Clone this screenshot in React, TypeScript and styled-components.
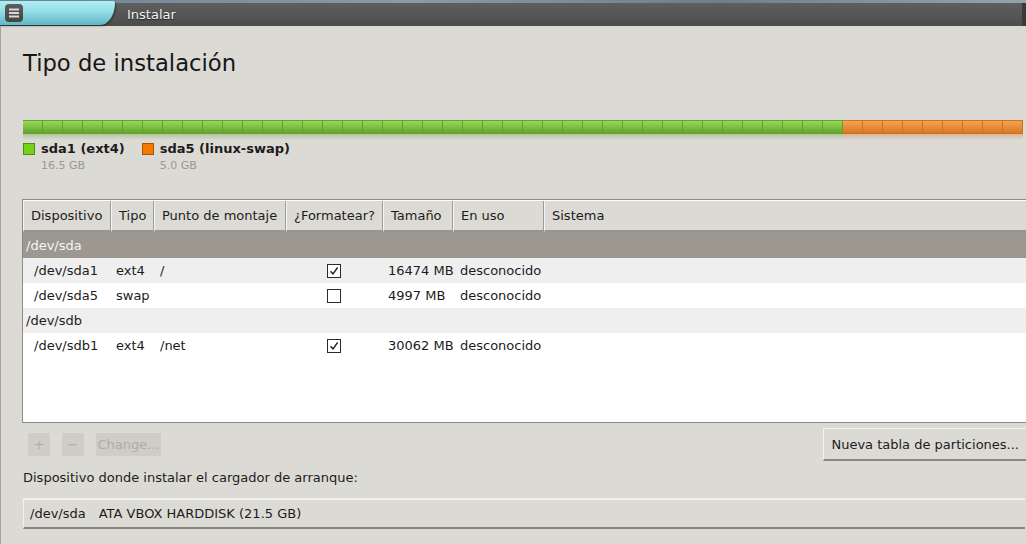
import React from 'react';
import styled, { createGlobalStyle } from 'styled-components';

const GlobalStyle = createGlobalStyle`
  html, body {
    margin: 0;
    padding: 0;
    background: #dcdad5;
  }
  body {
    width: 1026px;
    height: 544px;
    overflow: hidden;
    font-family: 'DejaVu Sans', 'Liberation Sans', sans-serif;
    font-size: 13px;
    color: #1c1c1c;
  }
`;

const Screen = styled.div`
  width: 1026px;
  height: 544px;
  display: flex;
  flex-direction: column;
  overflow: hidden;
`;

const DesktopStrip = styled.div`
  height: 3px;
  background: linear-gradient(90deg, #6f8393 0%, #8a9aa6 40%, #6c7f8e 70%, #97a3ab 100%);
  flex-shrink: 0;
`;

const TitleBar = styled.div`
  height: 23px;
  display: flex;
  align-items: center;
  background: linear-gradient(180deg, #5f5f5f 0%, #4c4c4c 100%);
  border-right: 4px solid #3a3a3a;
  flex-shrink: 0;
`;

const MenuTab = styled.div`
  width: 115px;
  height: 24px;
  margin-top: -2px;
  align-self: flex-start;
  background: linear-gradient(180deg, #aef0f4 0%, #93dde6 45%, #5fb7c6 100%);
  border-bottom-right-radius: 16px 24px;
  border-top-right-radius: 2px;
  box-shadow: 1px 1px 2px rgba(0, 0, 0, 0.45);
  display: flex;
  align-items: center;
  padding-left: 5px;
  box-sizing: border-box;
`;

const MenuButton = styled.div`
  width: 18px;
  height: 18px;
  border-radius: 4px;
  background: linear-gradient(180deg, #5c5c5c, #454545);
  display: flex;
  align-items: center;
  justify-content: center;
`;

const WindowTitle = styled.span`
  margin-left: 12px;
  color: #f4f4f4;
  font-size: 13px;
  text-shadow: 0 1px 1px rgba(0, 0, 0, 0.6);
`;

const Body = styled.div`
  flex: 1;
  border-left: 1px solid #a6a49f;
  padding: 0 0 0 22px;
  display: flex;
  flex-direction: column;
`;

const Heading = styled.h1`
  margin: 22px 0 0;
  font-size: 22.7px;
  font-weight: normal;
  height: 30px;
  line-height: 30px;
  color: #161616;
`;

const DiskBar = styled.div`
  margin-top: 42px;
  width: 1000px;
  display: flex;
  flex-direction: column;
`;

const BarTrack = styled.div`
  height: 14px;
  display: flex;
`;

const Segment = styled.div<{ $share: number; $top: string; $bottom: string; $edge: string }>`
  width: ${(p) => p.$share}%;
  height: 100%;
  box-sizing: border-box;
  border-top: 1px solid ${(p) => p.$edge};
  border-bottom: 1px solid ${(p) => p.$edge};
  background:
    repeating-linear-gradient(90deg, transparent 0 19px, ${(p) => p.$edge} 19px 20px),
    linear-gradient(180deg, ${(p) => p.$top} 0%, ${(p) => p.$bottom} 100%);
  opacity: 0.95;
`;

const Reflection = styled.div`
  height: 6px;
  display: flex;
  opacity: 0.35;
  -webkit-mask-image: linear-gradient(180deg, #000, transparent);
  mask-image: linear-gradient(180deg, #000, transparent);
`;

const ReflectionPart = styled.div<{ $share: number; $color: string }>`
  width: ${(p) => p.$share}%;
  height: 100%;
  background: ${(p) => p.$color};
`;

const Legend = styled.div`
  margin-top: 1px;
  display: flex;
  gap: 17px;
`;

const LegendItem = styled.div`
  display: grid;
  grid-template-columns: 12px auto;
  column-gap: 6px;
  row-gap: 2px;
  align-items: center;
`;

const Swatch = styled.span<{ $color: string; $edge: string }>`
  width: 12px;
  height: 12px;
  box-sizing: border-box;
  background: ${(p) => p.$color};
  border: 1px solid ${(p) => p.$edge};
`;

const LegendName = styled.span`
  font-weight: bold;
  font-size: 13px;
  line-height: 16px;
`;

const LegendSize = styled.span`
  grid-column: 2;
  font-size: 11px;
  color: #9a9894;
  line-height: 13px;
`;

const TableFrame = styled.div`
  margin-top: 27px;
  margin-left: -1px;
  width: 1010px;
  height: 222px;
  border: 1px solid #8e8b84;
  border-right: none;
  background: #ffffff;
  display: flex;
  flex-direction: column;
`;

const HeaderRow = styled.div`
  display: flex;
  height: 31px;
  flex-shrink: 0;
  border-top: 1px solid #ffffff;
`;

const HeaderCell = styled.div<{ $w?: number }>`
  ${(p) => (p.$w ? `width: ${p.$w}px;` : 'flex: 1;')}
  flex-shrink: 0;
  box-sizing: border-box;
  background: #dcdad5;
  border-left: 1px solid #f6f5f3;
  border-right: 1px solid #9e9b94;
  border-bottom: 2px solid #98958e;
  padding-left: 7px;
  display: flex;
  align-items: center;
  white-space: nowrap;
`;

const GroupRow = styled.div<{ $dark?: boolean }>`
  height: ${(p) => (p.$dark ? 26 : 25)}px;
  display: flex;
  align-items: center;
  padding-left: 3px;
  background: ${(p) => (p.$dark ? '#9c978f' : '#efefef')};
  color: ${(p) => (p.$dark ? '#f5f5f5' : '#1c1c1c')};
`;

const PartRow = styled.div<{ $shade?: boolean }>`
  height: 25px;
  display: flex;
  align-items: center;
  background: ${(p) => (p.$shade ? '#efefef' : '#ffffff')};
`;

const Cell = styled.div<{ $w: number; $pad?: number; $center?: boolean }>`
  width: ${(p) => p.$w}px;
  padding-left: ${(p) => p.$pad ?? 0}px;
  box-sizing: border-box;
  flex-shrink: 0;
  display: flex;
  justify-content: ${(p) => (p.$center ? 'center' : 'flex-start')};
  white-space: nowrap;
`;

const Check = styled.span`
  width: 14px;
  height: 14px;
  box-sizing: border-box;
  border: 1px solid #2a2a2a;
  background: #ffffff;
  display: flex;
  align-items: center;
  justify-content: center;
`;

const ActionRow = styled.div`
  margin-top: 5px;
  height: 33px;
  display: flex;
  align-items: center;
`;

const DimButton = styled.div<{ $w: number; $lead?: number }>`
  width: ${(p) => p.$w}px;
  height: 23px;
  margin-left: ${(p) => p.$lead ?? 0}px;
  margin-right: 12px;
  background: #cfcdc8;
  color: #aeaca7;
  display: flex;
  align-items: center;
  justify-content: center;
  font-size: 13px;
`;

const Spacer = styled.div`
  flex: 1;
`;

const PushButton = styled.div`
  height: 33px;
  box-sizing: border-box;
  padding: 0 7px;
  border-top: 1px solid #f3f2ef;
  border-left: 1px solid #f3f2ef;
  border-bottom: 2px solid #8a877f;
  background: #dcdad5;
  display: flex;
  align-items: center;
  white-space: nowrap;
`;

const FieldLabel = styled.div`
  margin-top: 9px;
  height: 16px;
  line-height: 16px;
`;

const Combo = styled.div`
  margin-top: 12px;
  width: 1002px;
  height: 31px;
  box-sizing: border-box;
  border-top: 2px solid #f1f0ed;
  border-bottom: 2px solid #8a877f;
  border-left: 1px solid #f1f0ed;
  padding-left: 6px;
  display: flex;
  align-items: center;
  gap: 13px;
`;

const GREEN = { top: '#93da52', bottom: '#5ea224', edge: '#5f9d2a' };
const ORANGE = { top: '#f7a14b', bottom: '#d9731a', edge: '#c86d22' };

const cols = [88, 43, 132, 97, 70, 91];

type Part = { dev: string; fs: string; mount: string; format: boolean; size: string };

const sda: Part[] = [
  { dev: '/dev/sda1', fs: 'ext4', mount: '/', format: true, size: '16474 MB' },
  { dev: '/dev/sda5', fs: 'swap', mount: '', format: false, size: '4997 MB' },
];
const sdb: Part[] = [{ dev: '/dev/sdb1', fs: 'ext4', mount: '/net', format: true, size: '30062 MB' }];

const CheckMark = () => (
  <svg width="10" height="10" viewBox="0 0 10 10">
    <path d="M1.5 5.2 L4 8 L8.6 1.5" fill="none" stroke="#1a1a1a" strokeWidth="1.3" />
  </svg>
);

const PartitionRow: React.FC<{ part: Part; shade?: boolean }> = ({ part, shade }) => (
  <PartRow $shade={shade}>
    <Cell $w={93} $pad={11}>{part.dev}</Cell>
    <Cell $w={44}>{part.fs}</Cell>
    <Cell $w={132}>{part.mount}</Cell>
    <Cell $w={84} $center>
      <Check>{part.format && <CheckMark />}</Check>
    </Cell>
    <Cell $w={84} $pad={12}>{part.size}</Cell>
    <Cell $w={100}>desconocido</Cell>
  </PartRow>
);

export default function App() {
  return (
    <Screen>
      <GlobalStyle />
      <DesktopStrip />
      <TitleBar>
        <MenuTab>
          <MenuButton>
            <svg width="10" height="10" viewBox="0 0 10 10">
              <rect x="0" y="0.5" width="10" height="2" fill="#d8d8d8" />
              <rect x="0" y="4" width="10" height="2" fill="#d8d8d8" />
              <rect x="0" y="7.5" width="10" height="2" fill="#d8d8d8" />
            </svg>
          </MenuButton>
        </MenuTab>
        <WindowTitle>Instalar</WindowTitle>
      </TitleBar>

      <Body>
        <Heading>Tipo de instalación</Heading>

        <DiskBar>
          <BarTrack>
            <Segment $share={82} $top={GREEN.top} $bottom={GREEN.bottom} $edge={GREEN.edge} />
            <Segment $share={18} $top={ORANGE.top} $bottom={ORANGE.bottom} $edge={ORANGE.edge} />
          </BarTrack>
          <Reflection>
            <ReflectionPart $share={82} $color={GREEN.bottom} />
            <ReflectionPart $share={18} $color={ORANGE.bottom} />
          </Reflection>
        </DiskBar>

        <Legend>
          <LegendItem>
            <Swatch $color="#73d216" $edge="#4e8f10" />
            <LegendName>sda1 (ext4)</LegendName>
            <LegendSize>16.5 GB</LegendSize>
          </LegendItem>
          <LegendItem>
            <Swatch $color="#f57900" $edge="#a85400" />
            <LegendName>sda5 (linux-swap)</LegendName>
            <LegendSize>5.0 GB</LegendSize>
          </LegendItem>
        </Legend>

        <TableFrame>
          <HeaderRow>
            {['Dispositivo', 'Tipo', 'Punto de montaje', '¿Formatear?', 'Tamaño', 'En uso'].map((h, i) => (
              <HeaderCell key={h} $w={cols[i]}>{h}</HeaderCell>
            ))}
            <HeaderCell>Sistema</HeaderCell>
          </HeaderRow>
          <GroupRow $dark>/dev/sda</GroupRow>
          {sda.map((p, i) => (
            <PartitionRow key={p.dev} part={p} shade={i === 0} />
          ))}
          <GroupRow>/dev/sdb</GroupRow>
          {sdb.map((p) => (
            <PartitionRow key={p.dev} part={p} />
          ))}
        </TableFrame>

        <ActionRow>
          <DimButton $w={22} $lead={5}>+</DimButton>
          <DimButton $w={22}>−</DimButton>
          <DimButton $w={65}>Change...</DimButton>
          <Spacer />
          <PushButton>Nueva tabla de particiones...</PushButton>
        </ActionRow>

        <FieldLabel>Dispositivo donde instalar el cargador de arranque:</FieldLabel>
        <Combo>
          <span>/dev/sda</span>
          <span>ATA VBOX HARDDISK (21.5 GB)</span>
        </Combo>
      </Body>
    </Screen>
  );
}
